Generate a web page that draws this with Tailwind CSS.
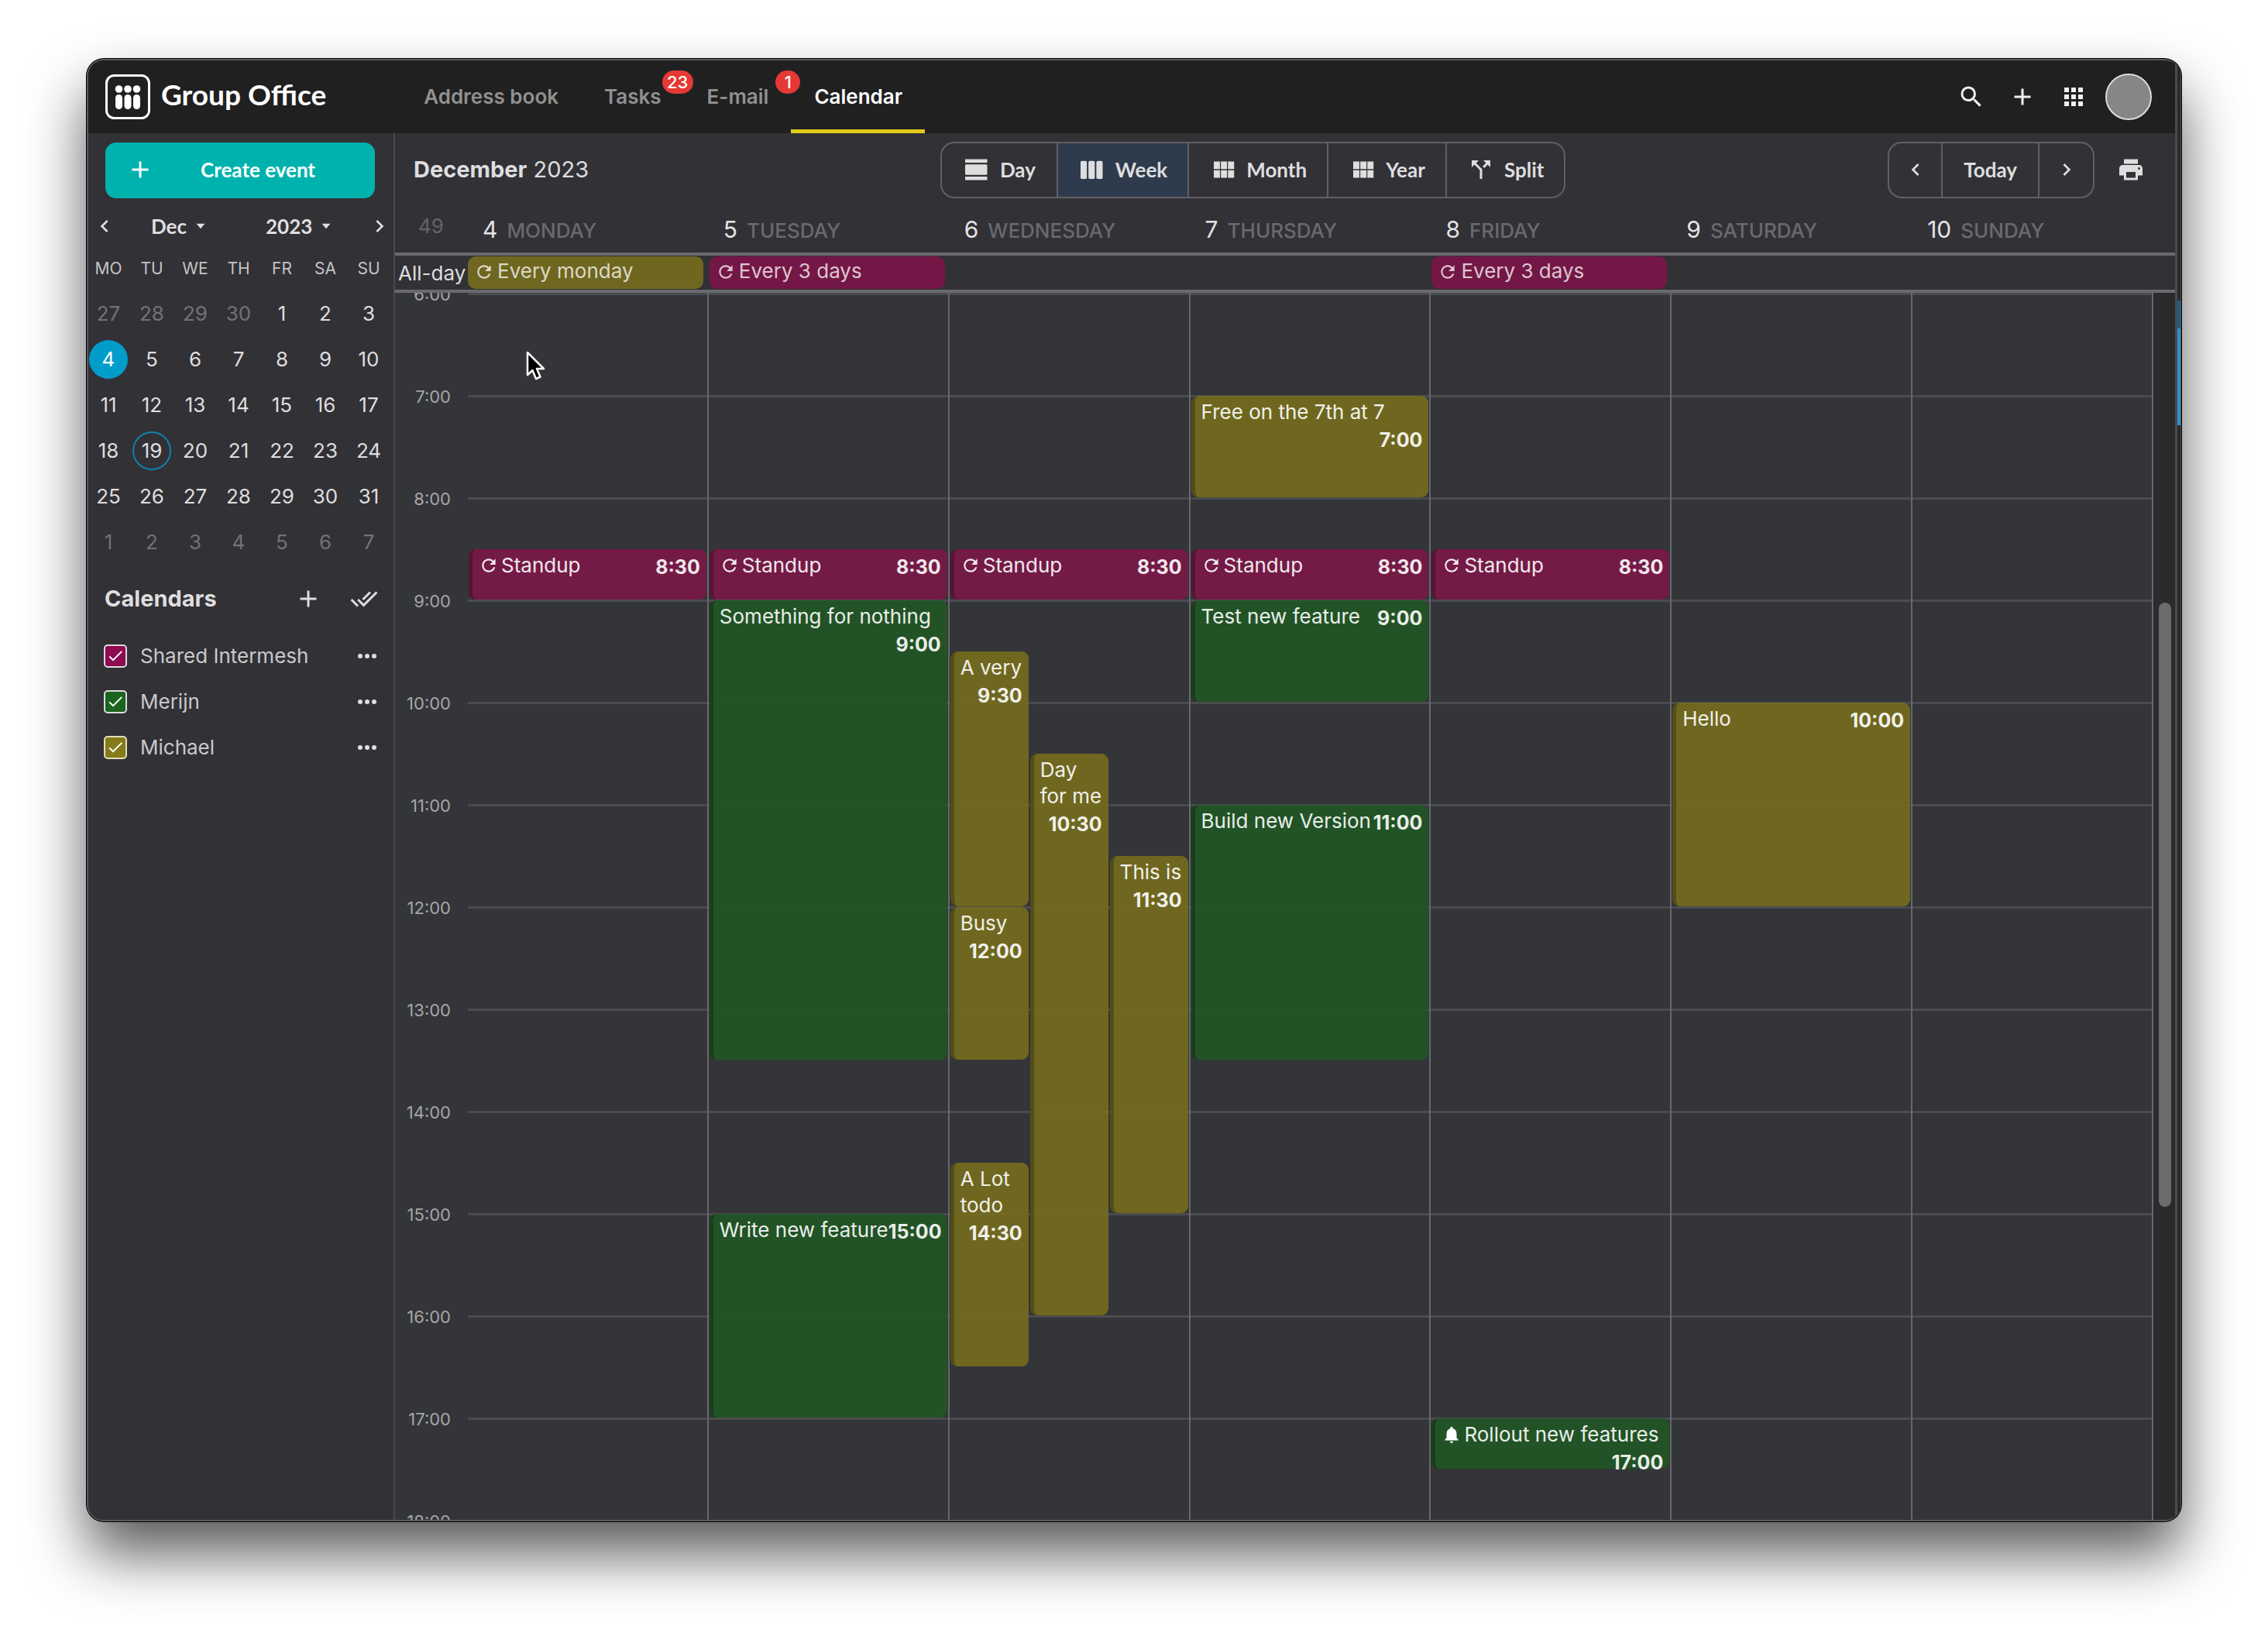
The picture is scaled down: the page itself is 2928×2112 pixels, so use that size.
<!DOCTYPE html>
<html lang="en">
<head>
<meta charset="utf-8">
<meta name="viewport" content="width=device-width, initial-scale=1">
<title>Group Office - Calendar</title>
<script src="https://cdn.jsdelivr.net/npm/@tailwindcss/browser@4"></script>
</head>
<body class="flex h-screen flex-col overflow-hidden bg-white px-[112px] pt-[76px] pb-[148px] font-['Inter',sans-serif] text-[26px] leading-[34px] text-[#dededf]">

<svg class="hidden" aria-hidden="true">
  <symbol id="i-search" viewBox="0 0 24 24"><path d="M15.5 14h-.79l-.28-.27A6.471 6.471 0 0 0 16 9.5 6.5 6.5 0 1 0 9.5 16c1.61 0 3.09-.59 4.23-1.57l.27.28v.79l5 4.99L20.49 19l-4.99-5zm-6 0C7.01 14 5 11.99 5 9.5S7.01 5 9.5 5 14 7.01 14 9.5 11.99 14 9.5 14z"/></symbol>
  <symbol id="i-plus" viewBox="0 0 24 24"><path d="M19 13h-6v6h-2v-6H5v-2h6V5h2v6h6v2z"/></symbol>
  <symbol id="i-apps" viewBox="0 0 24 24"><path d="M4 8h4V4H4v4zm6 12h4v-4h-4v4zm-6 0h4v-4H4v4zm0-6h4v-4H4v4zm6 0h4v-4h-4v4zm6-10v4h4V4h-4zm-6 4h4V4h-4v4zm6 6h4v-4h-4v4zm0 6h4v-4h-4v4z"/></symbol>
  <symbol id="i-print" viewBox="0 0 24 24"><path d="M19 8H5c-1.66 0-3 1.34-3 3v6h4v4h12v-4h4v-6c0-1.66-1.34-3-3-3zm-3 11H8v-5h8v5zm3-7c-.55 0-1-.45-1-1s.45-1 1-1 1 .45 1 1-.45 1-1 1zm-1-9H6v4h12V3z"/></symbol>
  <symbol id="i-day" viewBox="0 0 24 24"><path d="M2 21h19v-3H2v3zM20 7.500H3c-.55 0-1 .45-1 1v7c0 .55.45 1 1 1h17c.55 0 1-.45 1-1v-7c0-.55-.45-1-1-1zM2 3v3h19V3H2z"/></symbol>
  <symbol id="i-week" viewBox="0 0 24 24"><rect x="2" y="4.500" width="5.400" height="15.500" rx="1.200"/><rect x="8.800" y="4.500" width="5.400" height="15.500" rx="1.200"/><rect x="15.600" y="4.500" width="5.400" height="15.500" rx="1.200"/></symbol>
  <symbol id="i-module" viewBox="0 0 24 24"><path d="M4 11.500h5.300V5H4v6.500zm0 7.500h5.300v-6.500H4V19zm6.100 0h5.300v-6.500h-5.300V19zm6.100 0h5.300v-6.500h-5.300V19zm-6.100-7.500h5.300V5h-5.300v6.500zM16.200 5v6.500h5.300V5h-5.300z"/></symbol>
  <symbol id="i-split" viewBox="0 0 24 24"><path d="M14 4l2.290 2.290-2.880 2.880 1.420 1.420 2.880-2.880L20 10V4zm-4 0H4v6l2.290-2.290 4.710 4.700V20h2v-8.410l-5.290-5.300z"/></symbol>
  <symbol id="i-left" viewBox="0 0 24 24"><path d="M15.410 7.410L14 6l-6 6 6 6 1.410-1.410L10.830 12z"/></symbol>
  <symbol id="i-right" viewBox="0 0 24 24"><path d="M10 6L8.590 7.410 13.170 12l-4.580 4.590L10 18l6-6z"/></symbol>
  <symbol id="i-drop" viewBox="0 0 24 24"><path d="M7 9l5 6 5-6z"/></symbol>
  <symbol id="i-all" viewBox="0 0 24 24"><path d="M18 7l-1.410-1.410-6.340 6.340 1.410 1.410L18 7zm4.240-1.410L11.660 16.170 7.480 12l-1.410 1.410L11.660 19l12-12-1.420-1.410zM.41 13.410L6 19l1.410-1.410L1.830 12 .41 13.410z"/></symbol>
  <symbol id="i-more" viewBox="0 0 24 24"><circle cx="6" cy="12" r="2"/><circle cx="12" cy="12" r="2"/><circle cx="18" cy="12" r="2"/></symbol>
  <symbol id="i-repeat" viewBox="0 0 24 24"><path d="M17.650 6.350C16.200 4.900 14.210 4 12 4c-4.420 0-7.990 3.580-7.990 8s3.570 8 7.990 8c3.730 0 6.840-2.550 7.730-6h-2.080c-.82 2.330-3.040 4-5.650 4-3.310 0-6-2.690-6-6s2.690-6 6-6c1.660 0 3.140.69 4.220 1.780L13 11h7V4l-2.350 2.350z"/></symbol>
  <symbol id="i-bell" viewBox="0 0 24 24"><path d="M12 22c1.100 0 2-.9 2-2h-4c0 1.100.89 2 2 2zm6-6v-5c0-3.070-1.640-5.640-4.500-6.320V4c0-.83-.67-1.500-1.500-1.500s-1.500.67-1.500 1.500v.68C7.630 5.360 6 7.920 6 11v5l-2 2v1h16v-1l-2-2z"/></symbol>
  <symbol id="i-check" viewBox="0 0 24 24"><path d="M9 15.800L4.900 11.700l-1.400 1.400L9 18.600 21 6.600l-1.400-1.400z"/></symbol>
</svg>

<div class="flex min-h-0 flex-1 overflow-hidden rounded-[22px] border-2 border-r-0 border-[#56595e] bg-[#2a2a2c] shadow-[0_0_0_1px_#000,0_42px_76px_rgba(0,0,0,0.65)]">
  <div class="flex min-w-0 flex-1 flex-col border-r-[3px] border-[#4b4b4d] bg-[#323136]">

    <header class="flex h-[94px] shrink-0 items-center bg-[#202020] pl-[22px] pr-[30px]">
      <a href="#" class="flex items-center gap-[14px] text-white">
        <svg class="size-[58px]" viewBox="0 0 58 58" fill="#fff" aria-hidden="true">
          <rect x="1.500" y="1.500" width="55" height="55" rx="10" fill="none" stroke="#fff" stroke-width="3"/>
          <circle cx="17.500" cy="19" r="4.800"/><circle cx="29" cy="19" r="4.800"/><circle cx="40.500" cy="19" r="4.800"/>
          <rect x="13" y="26" width="9" height="19" rx="4.500"/><rect x="24.500" y="26" width="9" height="19" rx="4.500"/><rect x="36" y="26" width="9" height="19" rx="4.500"/>
        </svg>
        <span class="pb-1.5 font-['Lato',sans-serif] text-[37px] font-bold leading-[44px]">Group Office</span>
      </a>
      <nav class="ml-[96px] flex self-stretch font-semibold text-[#919191]">
        <a href="#" class="flex items-center pl-[30px] pr-[29px]">Address book</a>
        <a href="#" class="relative flex items-center pl-[30px] pr-[29px]">Tasks<span class="absolute top-[13px] -right-3 flex h-[30px] w-10 items-center justify-center rounded-full bg-[#e53935] text-[22px] font-medium text-white">23</span></a>
        <a href="#" class="relative flex items-center pl-[30px] pr-[29px]">E-mail<span class="absolute top-[13px] -right-3 z-10 flex h-[30px] w-8 items-center justify-center rounded-full bg-[#e53935] text-[22px] font-medium text-white">1</span></a>
        <a href="#" aria-current="page" class="flex items-center border-b-[5px] border-[#e3cb1c] pl-[30px] pr-[29px] pt-[5px] text-white">Calendar</a>
      </nav>
      <div class="ml-auto flex items-center gap-[30px] text-[#f0f0f0]">
        <button aria-label="Search"><svg class="size-9 fill-current"><use href="#i-search"/></svg></button>
        <button aria-label="Add"><svg class="size-9 fill-current"><use href="#i-plus"/></svg></button>
        <button aria-label="Apps"><svg class="size-9 fill-current"><use href="#i-apps"/></svg></button>
        <button aria-label="Account" class="-ml-[7px] size-[60px] rounded-full border-2 border-[#dcdcdc] bg-[#868686]"></button>
      </div>
    </header>

    <div class="flex min-h-0 flex-1">
      <aside class="w-[396px] shrink-0 border-r-2 border-[#4a4a4d] pt-3">
        <button class="ml-[22px] flex h-[72px] w-[348px] items-center rounded-[14px] bg-[#00b2ae] pb-0.5 pl-[27px] font-['Lato',sans-serif] font-bold text-white">
          <svg class="size-9 fill-current"><use href="#i-plus"/></svg><span class="ml-[60px]">Create event</span>
        </button>

        <div class="mt-[9px] flex h-[54px] items-center pl-[5px] font-['Lato',sans-serif] font-bold">
          <button aria-label="Previous month"><svg class="size-8 fill-current"><use href="#i-left"/></svg></button>
          <button class="ml-11 flex items-center gap-[5px]">Dec<svg class="size-[26px] fill-current"><use href="#i-drop"/></svg></button>
          <button class="ml-[71px] flex items-center gap-[5px]">2023<svg class="size-[26px] fill-current"><use href="#i-drop"/></svg></button>
          <button aria-label="Next month" class="ml-10"><svg class="size-8 fill-current"><use href="#i-right"/></svg></button>
        </div>

        <table class="-ml-0.5 w-[392px] table-fixed text-center">
          <thead>
            <tr class="h-14 text-[21px] text-[#c4c4c6]"><th class="font-normal">MO</th><th class="font-normal">TU</th><th class="font-normal">WE</th><th class="font-normal">TH</th><th class="font-normal">FR</th><th class="font-normal">SA</th><th class="font-normal">SU</th></tr>
          </thead>
          <tbody>
            <tr class="h-[59px]"><td class="text-[#727276]">27</td><td class="text-[#727276]">28</td><td class="text-[#727276]">29</td><td class="text-[#727276]">30</td><td>1</td><td>2</td><td>3</td></tr>
            <tr class="h-[59px]"><td><span class="mx-auto flex size-[50px] items-center justify-center rounded-full bg-[#009dcb] text-white">4</span></td><td>5</td><td>6</td><td>7</td><td>8</td><td>9</td><td>10</td></tr>
            <tr class="h-[59px]"><td>11</td><td>12</td><td>13</td><td>14</td><td>15</td><td>16</td><td>17</td></tr>
            <tr class="h-[59px]"><td>18</td><td><span class="mx-auto flex size-[50px] items-center justify-center rounded-full border-2 border-[#0d82ab]">19</span></td><td>20</td><td>21</td><td>22</td><td>23</td><td>24</td></tr>
            <tr class="h-[59px]"><td>25</td><td>26</td><td>27</td><td>28</td><td>29</td><td>30</td><td>31</td></tr>
            <tr class="h-[59px] text-[#727276]"><td>1</td><td>2</td><td>3</td><td>4</td><td>5</td><td>6</td><td>7</td></tr>
          </tbody>
        </table>

        <div class="mt-[14px] flex h-[60px] items-center pl-[21px] pr-5">
          <h2 class="flex-1 text-[29px] font-bold">Calendars</h2>
          <button aria-label="Add calendar" class="mr-9"><svg class="size-9 fill-current"><use href="#i-plus"/></svg></button>
          <button aria-label="Select all"><svg class="size-9 fill-current"><use href="#i-all"/></svg></button>
        </div>

        <ul class="mt-[14px] pl-5 pr-4 text-[#c9c9cb]">
          <li class="flex h-[59px] items-center">
            <label class="flex flex-1 items-center gap-[17px]">
              <span class="grid size-[30px]"><input type="checkbox" checked class="col-start-1 row-start-1 size-[30px] appearance-none rounded-[5px] border-2 border-[#dcdcdc] bg-[#8e0a52]"><svg class="pointer-events-none col-start-1 row-start-1 m-[3px] size-6 fill-white"><use href="#i-check"/></svg></span>Shared Intermesh
            </label>
            <button aria-label="Shared Intermesh options"><svg class="size-9 fill-[#dededf]"><use href="#i-more"/></svg></button>
          </li>
          <li class="flex h-[59px] items-center">
            <label class="flex flex-1 items-center gap-[17px]">
              <span class="grid size-[30px]"><input type="checkbox" checked class="col-start-1 row-start-1 size-[30px] appearance-none rounded-[5px] border-2 border-[#dcdcdc] bg-[#1b641f]"><svg class="pointer-events-none col-start-1 row-start-1 m-[3px] size-6 fill-white"><use href="#i-check"/></svg></span>Merijn
            </label>
            <button aria-label="Merijn options"><svg class="size-9 fill-[#dededf]"><use href="#i-more"/></svg></button>
          </li>
          <li class="flex h-[59px] items-center">
            <label class="flex flex-1 items-center gap-[17px]">
              <span class="grid size-[30px]"><input type="checkbox" checked class="col-start-1 row-start-1 size-[30px] appearance-none rounded-[5px] border-2 border-[#e2dfb8] bg-[#857b1a]"><svg class="pointer-events-none col-start-1 row-start-1 m-[3px] size-6 fill-white"><use href="#i-check"/></svg></span>Michael
            </label>
            <button aria-label="Michael options"><svg class="size-9 fill-[#dededf]"><use href="#i-more"/></svg></button>
          </li>
        </ul>
      </aside>

      <main class="flex min-w-0 flex-1 flex-col">
        <div class="flex h-24 shrink-0 items-center justify-between pb-0.5 pl-6 pr-[39px]">
          <h1 class="w-[264px] whitespace-nowrap text-[29px]"><b class="font-bold">December</b> 2023</h1>
          <div class="flex h-[73px] divide-x-2 divide-[#606065] overflow-hidden rounded-[18px] border-2 border-[#606065] font-['Lato',sans-serif] font-bold">
            <button class="flex items-center gap-3 px-[27px]"><svg class="size-9 fill-current"><use href="#i-day"/></svg>Day</button>
            <button aria-pressed="true" class="flex items-center gap-3 bg-[#2d3b4d] px-[26px]"><svg class="size-9 fill-current"><use href="#i-week"/></svg>Week</button>
            <button class="flex items-center gap-3 px-[26px]"><svg class="size-9 fill-current"><use href="#i-module"/></svg>Month</button>
            <button class="flex items-center gap-3 px-[26px]"><svg class="size-9 fill-current"><use href="#i-module"/></svg>Year</button>
            <button class="flex items-center gap-3 px-[26px]"><svg class="size-9 fill-current"><use href="#i-split"/></svg>Split</button>
          </div>
          <div class="flex items-center gap-[29px]">
            <div class="flex h-[73px] divide-x-2 divide-[#606065] rounded-[18px] border-2 border-[#606065] font-['Lato',sans-serif] font-bold">
              <button aria-label="Previous week" class="flex w-[69px] items-center justify-center"><svg class="size-8 fill-current"><use href="#i-left"/></svg></button>
              <button class="px-[27px]">Today</button>
              <button aria-label="Next week" class="flex w-[69px] items-center justify-center"><svg class="size-8 fill-current"><use href="#i-right"/></svg></button>
            </div>
            <button aria-label="Print"><svg class="size-9 fill-current"><use href="#i-print"/></svg></button>
          </div>
        </div>

        <div class="flex h-[58px] shrink-0 pr-7 pt-2.5 text-[#6a696e]">
          <div class="w-[94px] shrink-0 pl-[30px] leading-7 text-[#646368]">49</div>
          <div class="grid flex-1 grid-cols-7 font-medium leading-9">
            <div class="pl-[19px]"><span class="mr-3 text-[30px] font-normal text-[#e4e4e5]">4</span>MONDAY</div>
            <div class="pl-[19px]"><span class="mr-3 text-[30px] font-normal text-[#e4e4e5]">5</span>TUESDAY</div>
            <div class="pl-[19px]"><span class="mr-3 text-[30px] font-normal text-[#e4e4e5]">6</span>WEDNESDAY</div>
            <div class="pl-[19px]"><span class="mr-3 text-[30px] font-normal text-[#e4e4e5]">7</span>THURSDAY</div>
            <div class="pl-[19px]"><span class="mr-3 text-[30px] font-normal text-[#e4e4e5]">8</span>FRIDAY</div>
            <div class="pl-[19px]"><span class="mr-3 text-[30px] font-normal text-[#e4e4e5]">9</span>SATURDAY</div>
            <div class="pl-[19px]"><span class="mr-3 text-[30px] font-normal text-[#e4e4e5]">10</span>SUNDAY</div>
          </div>
        </div>

        <div class="flex h-[52px] shrink-0 border-y-4 border-[#6b6a6f] pr-7">
          <div class="w-[94px] shrink-0 whitespace-nowrap pl-1 pt-1.5">All-day</div>
          <div class="grid flex-1 grid-cols-7 py-px text-white/75">
            <div class="mr-[7px] flex items-start gap-1 rounded-[10px] bg-[#6f6720] px-2 pt-0.5"><svg class="mt-[5px] size-[26px] fill-current"><use href="#i-repeat"/></svg>Every monday</div>
            <div class="ml-px mr-1.5 flex items-start gap-1 rounded-[10px] bg-[#741746] px-2 pt-0.5"><svg class="mt-[5px] size-[26px] fill-current"><use href="#i-repeat"/></svg>Every 3 days</div>
            <div class="col-start-5 ml-px mr-1.5 flex items-start gap-1 rounded-[10px] bg-[#741746] px-2 pt-0.5"><svg class="mt-[5px] size-[26px] fill-current"><use href="#i-repeat"/></svg>Every 3 days</div>
          </div>
        </div>

        <div class="relative flex min-h-0 flex-1 overflow-hidden bg-[#343538]">
          <div class="w-[94px] shrink-0 pr-[22px] text-right text-[22px] leading-8 text-[#a5a6a8]">
            <div class="flex h-[132px] flex-col"><span class="-mt-[14px]">6:00</span></div>
            <div class="flex h-[132px] flex-col"><span class="-mt-[14px]">7:00</span></div>
            <div class="flex h-[132px] flex-col"><span class="-mt-[14px]">8:00</span></div>
            <div class="flex h-[132px] flex-col"><span class="-mt-[14px]">9:00</span></div>
            <div class="flex h-[132px] flex-col"><span class="-mt-[14px]">10:00</span></div>
            <div class="flex h-[132px] flex-col"><span class="-mt-[14px]">11:00</span></div>
            <div class="flex h-[132px] flex-col"><span class="-mt-[14px]">12:00</span></div>
            <div class="flex h-[132px] flex-col"><span class="-mt-[14px]">13:00</span></div>
            <div class="flex h-[132px] flex-col"><span class="-mt-[14px]">14:00</span></div>
            <div class="flex h-[132px] flex-col"><span class="-mt-[14px]">15:00</span></div>
            <div class="flex h-[132px] flex-col"><span class="-mt-[14px]">16:00</span></div>
            <div class="flex h-[132px] flex-col"><span class="-mt-[14px]">17:00</span></div>
            <div class="flex h-[132px] flex-col"><span class="-mt-[14px]">18:00</span></div>
          </div>

          <div class="grid min-w-0 flex-1 grid-cols-1 content-start">
            <div class="col-start-1 row-start-1 grid auto-rows-[132px]" aria-hidden="true">
              <div class="border-t-[3px] border-[#4b4c4f]"></div><div class="border-t-[3px] border-[#4b4c4f]"></div><div class="border-t-[3px] border-[#4b4c4f]"></div><div class="border-t-[3px] border-[#4b4c4f]"></div><div class="border-t-[3px] border-[#4b4c4f]"></div><div class="border-t-[3px] border-[#4b4c4f]"></div><div class="border-t-[3px] border-[#4b4c4f]"></div><div class="border-t-[3px] border-[#4b4c4f]"></div><div class="border-t-[3px] border-[#4b4c4f]"></div><div class="border-t-[3px] border-[#4b4c4f]"></div><div class="border-t-[3px] border-[#4b4c4f]"></div><div class="border-t-[3px] border-[#4b4c4f]"></div>
            </div>

            <div class="col-start-1 row-start-1 grid grid-cols-7 text-white/90">
              <div class="grid grid-cols-1 grid-rows-[repeat(24,66px)] border-r-2 border-[#67686b] px-px">
                <article class="row-[6/7] mt-px flex flex-wrap content-start items-start overflow-hidden rounded-[9px] border-l-[5px] border-black/25 bg-[#7b1748]/90 pl-2 pr-[5px] pt-1"><span class="flex items-center gap-[3px]"><svg class="size-[26px] fill-current"><use href="#i-repeat"/></svg>Standup</span><time class="ml-auto mr-[3px] pt-px text-[25px] font-bold leading-9">8:30</time></article>
              </div>
              <div class="grid grid-cols-1 grid-rows-[repeat(24,66px)] border-r-2 border-[#67686b] px-px">
                <article class="row-[6/7] mt-px flex flex-wrap content-start items-start overflow-hidden rounded-[9px] border-l-[5px] border-black/25 bg-[#7b1748]/90 pl-2 pr-[5px] pt-1"><span class="flex items-center gap-[3px]"><svg class="size-[26px] fill-current"><use href="#i-repeat"/></svg>Standup</span><time class="ml-auto mr-[3px] pt-px text-[25px] font-bold leading-9">8:30</time></article>
                <article class="row-[7/16] mt-px flex flex-wrap content-start items-start overflow-hidden rounded-[9px] border-l-[5px] border-black/25 bg-[#205725]/90 pl-2 pr-[5px] pt-1"><span>Something for nothing</span><time class="ml-auto mr-[3px] pt-px text-[25px] font-bold leading-9">9:00</time></article>
                <article class="row-[19/23] mt-px flex content-start items-start overflow-hidden whitespace-nowrap rounded-[9px] border-l-[5px] border-black/25 bg-[#205725]/90 pl-2 pr-[5px] pt-1"><span>Write new feature</span><time class="ml-auto mr-[3px] pt-px text-[25px] font-bold leading-9">15:00</time></article>
              </div>
              <div class="grid grid-cols-3 grid-rows-[repeat(24,66px)] gap-x-0.5 border-r-2 border-[#67686b] px-px">
                <article class="col-span-3 row-[6/7] mt-px flex flex-wrap content-start items-start overflow-hidden rounded-[9px] border-l-[5px] border-black/25 bg-[#7b1748]/90 pl-2 pr-[5px] pt-1"><span class="flex items-center gap-[3px]"><svg class="size-[26px] fill-current"><use href="#i-repeat"/></svg>Standup</span><time class="ml-auto mr-[3px] pt-px text-[25px] font-bold leading-9">8:30</time></article>
                <article class="col-start-1 row-[8/13] mt-px flex flex-wrap content-start items-start overflow-hidden rounded-[9px] border-l-[5px] border-black/25 bg-[#766d1d]/90 pl-2 pr-[5px] pt-1"><span>A very</span><time class="ml-auto mr-[3px] pt-px text-[25px] font-bold leading-9">9:30</time></article>
                <article class="col-start-1 row-[13/16] mt-px flex flex-wrap content-start items-start overflow-hidden rounded-[9px] border-l-[5px] border-black/25 bg-[#766d1d]/90 pl-2 pr-[5px] pt-1"><span>Busy</span><time class="ml-auto mr-[3px] pt-px text-[25px] font-bold leading-9">12:00</time></article>
                <article class="col-start-1 row-[18/22] mt-px flex flex-wrap content-start items-start overflow-hidden rounded-[9px] border-l-[5px] border-black/25 bg-[#766d1d]/90 pl-2 pr-[5px] pt-1"><span>A Lot todo</span><time class="ml-auto mr-[3px] pt-px text-[25px] font-bold leading-9">14:30</time></article>
                <article class="col-start-2 row-[10/21] mt-px flex flex-wrap content-start items-start overflow-hidden rounded-[9px] border-l-[5px] border-black/25 bg-[#766d1d]/90 pl-2 pr-[5px] pt-1"><span>Day for me</span><time class="ml-auto mr-[3px] pt-px text-[25px] font-bold leading-9">10:30</time></article>
                <article class="col-start-3 row-[12/19] mt-px flex flex-wrap content-start items-start overflow-hidden rounded-[9px] border-l-[5px] border-black/25 bg-[#766d1d]/90 pl-2 pr-[5px] pt-1"><span>This is</span><time class="ml-auto mr-[3px] pt-px text-[25px] font-bold leading-9">11:30</time></article>
              </div>
              <div class="grid grid-cols-1 grid-rows-[repeat(24,66px)] border-r-2 border-[#67686b] px-px">
                <article class="row-[3/5] mt-px flex flex-wrap content-start items-start overflow-hidden rounded-[9px] border-l-[5px] border-black/25 bg-[#766d1d]/90 pl-2 pr-[5px] pt-1"><span>Free on the 7th at 7</span><time class="ml-auto mr-[3px] pt-px text-[25px] font-bold leading-9">7:00</time></article>
                <article class="row-[6/7] mt-px flex flex-wrap content-start items-start overflow-hidden rounded-[9px] border-l-[5px] border-black/25 bg-[#7b1748]/90 pl-2 pr-[5px] pt-1"><span class="flex items-center gap-[3px]"><svg class="size-[26px] fill-current"><use href="#i-repeat"/></svg>Standup</span><time class="ml-auto mr-[3px] pt-px text-[25px] font-bold leading-9">8:30</time></article>
                <article class="row-[7/9] mt-px flex flex-wrap content-start items-start overflow-hidden rounded-[9px] border-l-[5px] border-black/25 bg-[#205725]/90 pl-2 pr-[5px] pt-1"><span>Test new feature</span><time class="ml-auto mr-[3px] pt-px text-[25px] font-bold leading-9">9:00</time></article>
                <article class="row-[11/16] mt-px flex content-start items-start overflow-hidden whitespace-nowrap rounded-[9px] border-l-[5px] border-black/25 bg-[#205725]/90 pl-2 pr-[5px] pt-1"><span>Build new Version</span><time class="ml-auto mr-[3px] pt-px text-[25px] font-bold leading-9">11:00</time></article>
              </div>
              <div class="grid grid-cols-1 grid-rows-[repeat(24,66px)] border-r-2 border-[#67686b] px-px">
                <article class="row-[6/7] mt-px flex flex-wrap content-start items-start overflow-hidden rounded-[9px] border-l-[5px] border-black/25 bg-[#7b1748]/90 pl-2 pr-[5px] pt-1"><span class="flex items-center gap-[3px]"><svg class="size-[26px] fill-current"><use href="#i-repeat"/></svg>Standup</span><time class="ml-auto mr-[3px] pt-px text-[25px] font-bold leading-9">8:30</time></article>
                <article class="row-[23/24] mt-px flex flex-wrap content-start items-start rounded-[9px] border-l-[5px] border-black/25 bg-[#205725]/90 pl-2 pr-[5px] pt-1"><span class="flex items-center gap-[3px] whitespace-nowrap"><svg class="size-[26px] fill-white"><use href="#i-bell"/></svg>Rollout new features</span><time class="ml-auto mr-[3px] pt-px text-[25px] font-bold leading-9">17:00</time></article>
              </div>
              <div class="grid grid-cols-1 grid-rows-[repeat(24,66px)] border-r-2 border-[#67686b] px-px">
                <article class="row-[9/13] mt-px flex flex-wrap content-start items-start overflow-hidden rounded-[9px] border-l-[5px] border-black/25 bg-[#766d1d]/90 pl-2 pr-[5px] pt-1"><span>Hello</span><time class="ml-auto mr-[3px] pt-px text-[25px] font-bold leading-9">10:00</time></article>
              </div>
              <div class="border-r-2 border-[#67686b]"></div>
            </div>
          </div>

          <div class="w-7 shrink-0 bg-[#2b2b2b] pl-[7px] pt-[400px]">
            <div class="h-[780px] w-4 rounded-full bg-[#6c6c6c]"></div>
          </div>

          <svg class="absolute left-[168px] top-[74px] h-[42px] w-[28px]" viewBox="0 0 28 42" aria-hidden="true"><path d="M3 3v29l6.500-6 4.500 11 5.500-2.500-4.500-10.500h9z" fill="#000" stroke="#fff" stroke-width="2.500" stroke-linejoin="round"/></svg>
        </div>
      </main>
    </div>
  </div>

  <div class="flex w-[5px] shrink-0 flex-col border-r border-[#55565a]" aria-hidden="true">
    <div class="mt-[310px] h-9 bg-[#1d5c8b]"></div>
    <div class="h-[125px] bg-[#2e93cc]"></div>
  </div>
</div>
</body>
</html>
